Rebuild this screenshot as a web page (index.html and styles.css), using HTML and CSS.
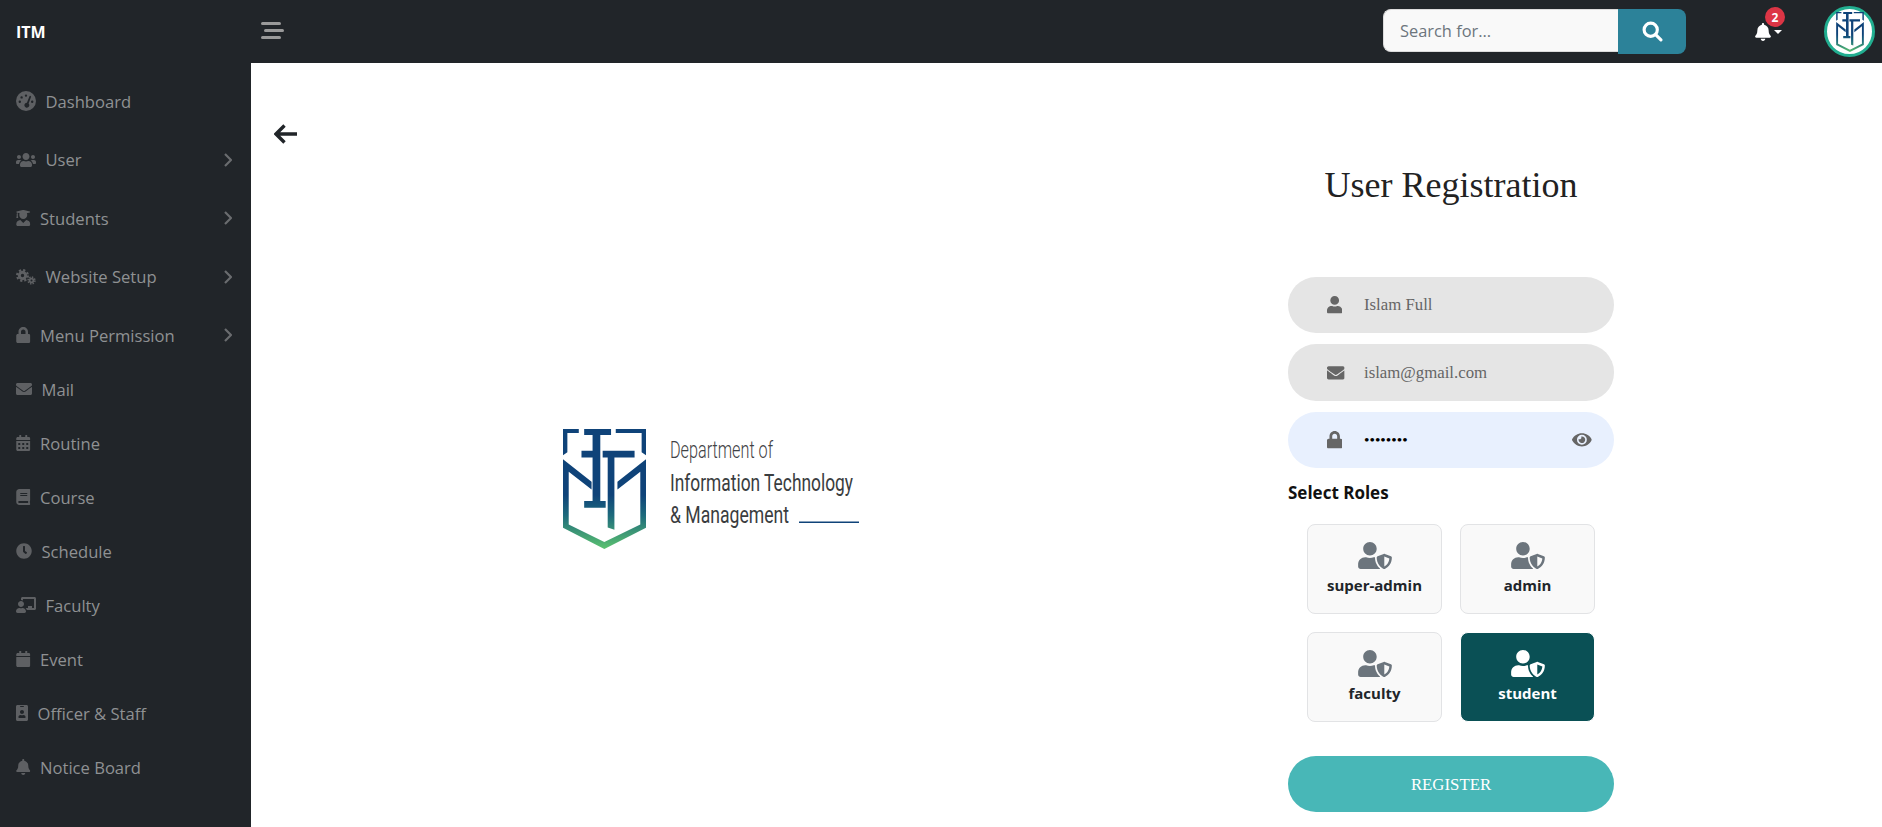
FILE: index.html
```html
<!DOCTYPE html>
<html lang="en">
<head>
<meta charset="utf-8">
<title>User Registration</title>
<link rel="stylesheet" href="styles.css">
</head>
<body>
<svg class="sprite" aria-hidden="true">
  <defs>
    <linearGradient id="shieldGrad" gradientUnits="userSpaceOnUse" x1="0" y1="28" x2="0" y2="385">
      <stop offset="0.55" stop-color="#0f4379"/>
      <stop offset="0.72" stop-color="#1d6a7c"/>
      <stop offset="1" stop-color="#5cc370"/>
    </linearGradient>
    <symbol id="itm" viewBox="25 28 247 357">
      <path fill="url(#shieldGrad)" d="M25 28H72V40H38V97L25 106ZM88 28H168V46H136V93H136V113H136V242H152V262H88V242H113V113H80V93H113V46H88ZM143 93H238V113H178V328L158 321V113H143ZM182 28H272V106L259 97V40H182ZM25 118L110 185V208L42 155V312L148 364L255 312V155L187 208V185L272 118V322L148 385L25 322Z"/>
    </symbol>
    <symbol id="i-user" viewBox="0 0 448 512"><path d="M224 256c70.7 0 128-57.3 128-128S294.7 0 224 0 96 57.3 96 128s57.3 128 128 128zm89.6 32h-16.7c-22.2 10.2-46.9 16-72.9 16s-50.6-5.8-72.9-16h-16.7C60.2 288 0 348.2 0 422.4V464c0 26.5 21.5 48 48 48h352c26.5 0 48-21.5 48-48v-41.6c0-74.2-60.2-134.4-134.4-134.4z"/></symbol>
    <symbol id="i-env" viewBox="0 0 512 512"><path d="M502.3 190.8c3.9-3.1 9.7-.2 9.7 4.7V400c0 26.5-21.5 48-48 48H48c-26.5 0-48-21.5-48-48V195.6c0-5 5.7-7.8 9.7-4.7 22.4 17.4 52.1 39.5 154.1 113.6 21.1 15.4 56.7 47.8 92.2 47.6 35.7.3 72-32.8 92.3-47.6 102-74.1 131.6-96.3 154-113.7zM256 320c23.2.4 56.6-29.2 73.4-41.4 132.7-96.3 142.8-104.7 173.4-128.7 5.8-4.5 9.2-11.5 9.2-18.9v-19c0-26.5-21.5-48-48-48H48C21.5 64 0 85.5 0 112v19c0 7.4 3.4 14.3 9.2 18.9 30.6 23.9 40.7 32.4 173.4 128.7 16.8 12.2 50.2 41.8 73.4 41.4z"/></symbol>
    <symbol id="i-lock" viewBox="0 0 448 512"><path d="M400 224h-24v-72C376 68.2 307.8 0 224 0S72 68.2 72 152v72H48c-26.5 0-48 21.5-48 48v192c0 26.5 21.5 48 48 48h352c26.5 0 48-21.5 48-48V272c0-26.5-21.5-48-48-48zm-104 0H152v-72c0-39.7 32.3-72 72-72s72 32.3 72 72v72z"/></symbol>
    <symbol id="i-bell" viewBox="0 0 448 512"><path d="M224 512c35.32 0 63.97-28.65 63.97-64H160.03c0 35.35 28.65 64 63.97 64zm215.39-149.71c-19.32-20.76-55.47-51.99-55.47-154.29 0-77.7-54.48-139.9-127.94-155.16V32c0-17.67-14.32-32-31.98-32s-31.98 14.33-31.98 32v20.84C118.56 68.1 64.08 130.3 64.08 208c0 102.3-36.15 133.53-55.47 154.29-6 6.45-8.66 14.16-8.61 21.71.11 16.4 12.98 32 32.1 32h383.8c19.12 0 32-15.6 32.1-32 .05-7.55-2.61-15.27-8.61-21.71z"/></symbol>
    <symbol id="i-clock" viewBox="0 0 512 512"><path d="M256 8C119 8 8 119 8 256s111 248 248 248 248-111 248-248S393 8 256 8zm92.49 313l-20 25a16 16 0 0 1-22.49 2.5l-67-49.72a40 40 0 0 1-15-31.23V112a16 16 0 0 1 16-16h32a16 16 0 0 1 16 16v144l58 42.5a16 16 0 0 1 2.49 22.5z"/></symbol>
    <symbol id="i-cal" viewBox="0 0 448 512"><path d="M12 192h424c6.6 0 12 5.4 12 12v260c0 26.5-21.5 48-48 48H48c-26.5 0-48-21.5-48-48V204c0-6.6 5.4-12 12-12zm436-44v-36c0-26.5-21.5-48-48-48h-48V12c0-6.6-5.4-12-12-12h-40c-6.6 0-12 5.4-12 12v52H160V12c0-6.6-5.4-12-12-12h-40c-6.6 0-12 5.4-12 12v52H48C21.5 64 0 85.5 0 112v36c0 6.6 5.4 12 12 12h424c6.6 0 12-5.4 12-12z"/></symbol>
    <symbol id="i-calalt" viewBox="0 0 448 512"><path d="M0 464c0 26.5 21.5 48 48 48h352c26.5 0 48-21.5 48-48V192H0v272zm320-196c0-6.6 5.4-12 12-12h40c6.6 0 12 5.4 12 12v40c0 6.6-5.4 12-12 12h-40c-6.6 0-12-5.4-12-12v-40zm0 128c0-6.6 5.4-12 12-12h40c6.6 0 12 5.4 12 12v40c0 6.6-5.4 12-12 12h-40c-6.6 0-12-5.4-12-12v-40zM192 268c0-6.6 5.4-12 12-12h40c6.6 0 12 5.4 12 12v40c0 6.6-5.4 12-12 12h-40c-6.6 0-12-5.4-12-12v-40zm0 128c0-6.6 5.4-12 12-12h40c6.6 0 12 5.4 12 12v40c0 6.6-5.4 12-12 12h-40c-6.6 0-12-5.4-12-12v-40zM64 268c0-6.6 5.4-12 12-12h40c6.6 0 12 5.4 12 12v40c0 6.6-5.4 12-12 12H76c-6.6 0-12-5.4-12-12v-40zm0 128c0-6.6 5.4-12 12-12h40c6.6 0 12 5.4 12 12v40c0 6.6-5.4 12-12 12H76c-6.6 0-12-5.4-12-12v-40zM400 64h-48V16c0-8.8-7.2-16-16-16h-32c-8.8 0-16 7.2-16 16v48H160V16c0-8.8-7.2-16-16-16h-32c-8.8 0-16 7.2-16 16v48H48C21.5 64 0 85.5 0 112v48h448v-48c0-26.5-21.5-48-48-48z"/></symbol>
    <symbol id="i-book" viewBox="0 0 448 512"><path d="M448 360V24c0-13.3-10.7-24-24-24H96C43 0 0 43 0 96v320c0 53 43 96 96 96h328c13.3 0 24-10.7 24-24v-16c0-7.5-3.5-14.3-8.9-18.7-4.2-15.4-4.2-59.3 0-74.7 5.4-4.3 8.9-11.1 8.9-18.6zM128 134c0-3.3 2.7-6 6-6h212c3.3 0 6 2.7 6 6v20c0 3.3-2.7 6-6 6H134c-3.3 0-6-2.7-6-6v-20zm0 64c0-3.3 2.7-6 6-6h212c3.3 0 6 2.7 6 6v20c0 3.3-2.7 6-6 6H134c-3.3 0-6-2.7-6-6v-20zm253.4 250H96c-17.7 0-32-14.3-32-32 0-17.6 14.4-32 32-32h285.4c-1.9 17.1-1.9 46.9 0 64z"/></symbol>
    <symbol id="i-users" viewBox="0 0 640 512"><path d="M96 224c35.3 0 64-28.7 64-64s-28.7-64-64-64-64 28.7-64 64 28.7 64 64 64zm448 0c35.3 0 64-28.7 64-64s-28.7-64-64-64-64 28.7-64 64 28.7 64 64 64zm32 32h-64c-17.6 0-33.5 7.1-45.1 18.6 40.3 22.1 68.9 62 75.1 109.4h66c17.7 0 32-14.3 32-32v-32c0-35.3-28.7-64-64-64zm-256 0c61.9 0 112-50.1 112-112S381.9 32 320 32 208 82.1 208 144s50.1 112 112 112zm76.8 32h-8.3c-20.8 10-43.9 16-68.5 16s-47.6-6-68.5-16h-8.3C179.6 288 128 339.6 128 403.2V432c0 26.5 21.5 48 48 48h288c26.5 0 48-21.5 48-48v-28.8c0-63.6-51.6-115.2-115.2-115.2zm-223.7-13.4C161.5 263.1 145.6 256 128 256H64c-35.3 0-64 28.7-64 64v32c0 17.7 14.3 32 32 32h65.9c6.3-47.4 34.9-87.3 75.2-109.4z"/></symbol>
    <symbol id="i-grad" viewBox="0 0 448 512"><path d="M319.4 320.6L224 416l-95.4-95.4C57.1 323.7 0 382.2 0 454.4v9.6c0 26.5 21.5 48 48 48h352c26.5 0 48-21.5 48-48v-9.6c0-72.2-57.1-130.7-128.6-133.8zM13.6 79.8l6.4 1.5v58.4c-7 4.2-12 11.5-12 20.3 0 8.4 4.6 15.4 11.1 19.7L3.5 242c-1.7 6.9 2.1 14 7.6 14h41.8c5.5 0 9.3-7.1 7.6-14l-15.6-62.3C51.4 175.4 56 168.4 56 160c0-8.8-5-16.1-12-20.3V87.1l66 15.9c-8.6 17.2-14 36.4-14 57 0 70.7 57.3 128 128 128s128-57.3 128-128c0-20.6-5.3-39.8-14-57l96.3-23.2c18.2-4.4 18.2-27.1 0-31.5l-190.4-46c-13-3.1-26.7-3.1-39.7 0L13.6 48.2c-18.1 4.4-18.1 27.2 0 31.6z"/></symbol>
    <symbol id="i-board" viewBox="0 0 640 512"><path d="M208 352c-2.39 0-4.78.35-7.06 1.09C187.98 357.3 174.35 360 160 360c-14.35 0-27.98-2.7-40.95-6.91-2.28-.74-4.66-1.09-7.05-1.09C49.94 352-.33 402.48 0 464.62.14 490.88 21.73 512 48 512h224c26.27 0 47.86-21.12 48-47.38.33-62.14-49.94-112.62-112-112.62zm-48-32c53.02 0 96-42.98 96-96s-42.98-96-96-96-96 42.98-96 96 42.98 96 96 96zM592 0H208c-26.47 0-48 22.25-48 49.59V96c23.42 0 45.1 6.78 64 17.8V64h352v288h-64v-64H384v64h-76.24c19.1 16.69 33.12 38.73 39.69 64H592c26.47 0 48-22.25 48-49.59V49.59C640 22.25 618.47 0 592 0z"/></symbol>
    <symbol id="i-badge" viewBox="0 0 384 512"><path d="M336 0H48C21.5 0 0 21.5 0 48v416c0 26.5 21.5 48 48 48h288c26.5 0 48-21.5 48-48V48c0-26.5-21.5-48-48-48zM144 32h96c8.8 0 16 7.2 16 16s-7.2 16-16 16h-96c-8.8 0-16-7.2-16-16s7.2-16 16-16zm48 128c35.3 0 64 28.7 64 64s-28.7 64-64 64-64-28.7-64-64 28.7-64 64-64zm112 236.8c0 10.6-10 19.2-22.4 19.2H102.4C90 416 80 407.4 80 396.8v-19.2c0-31.8 30.1-57.6 67.2-57.6h5c12.3 5.1 25.7 8 39.8 8s27.6-2.9 39.8-8h5c37.1 0 67.2 25.8 67.2 57.6v19.2z"/></symbol>
    <symbol id="i-eye" viewBox="0 0 576 512"><path d="M572.52 241.4C518.29 135.59 410.93 64 288 64S57.68 135.64 3.48 241.41a32.35 32.35 0 0 0 0 29.19C57.71 376.41 165.07 448 288 448s230.32-71.64 284.52-177.41a32.35 32.35 0 0 0 0-29.19zM288 400a144 144 0 1 1 144-144 143.93 143.93 0 0 1-144 144zm0-240a95.31 95.31 0 0 0-25.31 3.79 47.85 47.85 0 0 1-66.9 66.9A95.78 95.78 0 1 0 288 160z"/></symbol>
    <symbol id="i-shield" viewBox="0 0 640 512"><path d="M622.3 271.1l-115.2-45c-4.1-1.6-12.6-3.7-22.2 0l-115.2 45c-10.7 4.2-17.7 14-17.7 24.9 0 111.6 68.7 188.8 132.9 213.9 9.6 3.7 18 1.6 22.2 0C558.4 489.9 640 420.5 640 296c0-10.9-7-20.7-17.7-24.9zM496 462.4V273.3l95.5 37.3c-5.6 87.1-60.9 135.4-95.5 151.8zM224 256c70.7 0 128-57.3 128-128S294.7 0 224 0 96 57.3 96 128s57.3 128 128 128zm96 40c0-2.5.8-4.8 1.1-7.2-2.5-.1-4.9-.8-7.5-.8h-16.7c-22.2 10.2-46.9 16-72.9 16s-50.6-5.8-72.9-16h-16.7C60.2 288 0 348.2 0 422.4V464c0 26.5 21.5 48 48 48h352c6.8 0 13.3-1.5 19.2-4-54-42.9-99.2-116.7-99.2-212z"/></symbol>
    <symbol id="i-dash" viewBox="0 0 20 20"><path fill-rule="evenodd" d="M10 0a10 10 0 1 1 0 20a10 10 0 1 1 0-20ZM10 3.4a1.2 1.2 0 1 0 0 2.4a1.2 1.2 0 1 0 0-2.4ZM5.6 5.2a1.2 1.2 0 1 0 0 2.4a1.2 1.2 0 1 0 0-2.4ZM3.8 9.6a1.2 1.2 0 1 0 0 2.4a1.2 1.2 0 1 0 0-2.4ZM16.2 9.6a1.2 1.2 0 1 0 0 2.4a1.2 1.2 0 1 0 0-2.4ZM13.4 5.4L10.9 11.7a2.5 2.5 0 1 0 1.7.7L15 6.1a.85.85 0 0 0-1.6-.7Z"/></symbol>
    <symbol id="i-cogs" viewBox="0 0 20 16">
      <circle cx="6.5" cy="6.5" r="3.2" fill="none" stroke="currentColor" stroke-width="3"/>
      <circle cx="6.5" cy="6.5" r="5.4" fill="none" stroke="currentColor" stroke-width="2.2" stroke-dasharray="2.2 2.04"/>
      <circle cx="15.5" cy="11.5" r="1.9" fill="none" stroke="currentColor" stroke-width="1.8"/>
      <circle cx="15.5" cy="11.5" r="3.4" fill="none" stroke="currentColor" stroke-width="1.6" stroke-dasharray="1.4 1.27"/>
    </symbol>
  </defs>
</svg>

<div class="app">
  <div class="brand">ITM</div>

  <header class="topbar">
    <button class="hamburger" type="button" aria-label="Toggle menu"><span></span><span class="mid"></span><span></span></button>
    <form class="search">
      <input class="search-input" type="text" placeholder="Search for...">
      <button class="search-btn" type="button" aria-label="Search">
        <svg class="search-icon" viewBox="0 0 20 20"><circle cx="8.3" cy="8.3" r="6.3"/><path d="M13 13l5 5"/></svg>
      </button>
    </form>
    <div class="notify">
      <svg class="bell"><use href="#i-bell"/></svg>
      <span class="caret"></span>
      <span class="badge">2</span>
    </div>
    <div class="avatar"><svg class="avatar-logo"><use href="#itm"/></svg></div>
  </header>

  <nav class="sidebar">
    <a class="nav-item wide"><svg class="ic dash"><use href="#i-dash"/></svg><span>Dashboard</span></a>
    <a class="nav-item wide"><svg class="ic w20"><use href="#i-users"/></svg><span>User</span><svg class="chev" viewBox="0 0 8 14"><path d="M1 1l6 6-6 6"/></svg></a>
    <a class="nav-item wide"><svg class="ic w14"><use href="#i-grad"/></svg><span>Students</span><svg class="chev" viewBox="0 0 8 14"><path d="M1 1l6 6-6 6"/></svg></a>
    <a class="nav-item wide"><svg class="ic w20"><use href="#i-cogs"/></svg><span>Website Setup</span><svg class="chev" viewBox="0 0 8 14"><path d="M1 1l6 6-6 6"/></svg></a>
    <a class="nav-item"><svg class="ic w14"><use href="#i-lock"/></svg><span>Menu Permission</span><svg class="chev" viewBox="0 0 8 14"><path d="M1 1l6 6-6 6"/></svg></a>
    <a class="nav-item"><svg class="ic w16"><use href="#i-env"/></svg><span>Mail</span></a>
    <a class="nav-item"><svg class="ic w14"><use href="#i-calalt"/></svg><span>Routine</span></a>
    <a class="nav-item"><svg class="ic w14"><use href="#i-book"/></svg><span>Course</span></a>
    <a class="nav-item"><svg class="ic w16"><use href="#i-clock"/></svg><span>Schedule</span></a>
    <a class="nav-item"><svg class="ic w20"><use href="#i-board"/></svg><span>Faculty</span></a>
    <a class="nav-item"><svg class="ic w14"><use href="#i-cal"/></svg><span>Event</span></a>
    <a class="nav-item"><svg class="ic w12"><use href="#i-badge"/></svg><span>Officer &amp; Staff</span></a>
    <a class="nav-item"><svg class="ic w14"><use href="#i-bell"/></svg><span>Notice Board</span></a>
  </nav>

  <main class="content">
    <section class="left">
      <svg class="back" viewBox="0 0 24 20" aria-label="Back"><path d="M23 10H2M10.5 1.5L2 10l8.5 8.5"/></svg>
      <svg class="logo" viewBox="0 0 300 122">
        <use href="#itm" x="0" y="0" width="83" height="120"/>
        <text class="logo-thin" x="107" y="29" textLength="103" lengthAdjust="spacingAndGlyphs">Department of</text>
        <text class="logo-reg" x="107" y="62" textLength="183" lengthAdjust="spacingAndGlyphs">Information Technology</text>
        <text class="logo-reg" x="107" y="94" textLength="119" lengthAdjust="spacingAndGlyphs">&amp; Management</text>
        <rect class="logo-rule" x="236" y="92.5" width="60" height="1.5"/>
      </svg>
    </section>

    <section class="form-col">
      <h1 class="title">User Registration</h1>
      <form class="form">
        <label class="field"><svg class="field-ic w15"><use href="#i-user"/></svg><input class="field-input" type="text" value="Islam Full"></label>
        <label class="field tall"><svg class="field-ic w18"><use href="#i-env"/></svg><input class="field-input" type="text" value="islam@gmail.com"></label>
        <label class="field filled"><svg class="field-ic w15"><use href="#i-lock"/></svg><input class="field-input pass" type="password" value="password"><svg class="eye"><use href="#i-eye"/></svg></label>
        <h2 class="roles-title">Select Roles</h2>
        <div class="roles">
          <div class="role"><svg class="role-ic"><use href="#i-shield"/></svg><span>super-admin</span></div>
          <div class="role"><svg class="role-ic"><use href="#i-shield"/></svg><span>admin</span></div>
          <div class="role"><svg class="role-ic"><use href="#i-shield"/></svg><span>faculty</span></div>
          <div class="role active"><svg class="role-ic"><use href="#i-shield"/></svg><span>student</span></div>
        </div>
        <button class="register" type="button">REGISTER</button>
      </form>
    </section>
  </main>
</div>
</body>
</html>
```
FILE: styles.css
```css
* { box-sizing: border-box; }
html, body { margin: 0; height: 100%; overflow: hidden; background: #fff; }
body { font-family: "Open Sans", "Noto Sans", sans-serif; color: #212529; }

.sprite { position: absolute; width: 0; height: 0; overflow: hidden; }

.app {
  display: grid;
  grid-template-columns: 251px 1fr;
  grid-template-rows: 63px 1fr;
  height: 827px;
}

.brand {
  background: #212529;
  color: #fff;
  font-weight: 700;
  font-size: 16px;
  padding-left: 16px;
  display: flex;
  align-items: center;
}

/* top bar */
.topbar {
  background: #212529;
  display: flex;
  align-items: center;
  padding: 0 7px 0 10px;
}
.hamburger {
  width: 23px;
  height: 17.4px;
  margin-top: -2px;
  padding: 0;
  border: 0;
  background: none;
  display: flex;
  flex-direction: column;
  justify-content: space-between;
  align-items: flex-start;
}
.hamburger span { display: block; width: 20px; height: 3.6px; border-radius: 2px; background: #9a9a9a; }
.hamburger .mid { margin-left: 3px; }

.search { display: flex; align-items: flex-start; margin-left: auto; width: 303px; height: 45px; }
.search-input {
  width: 235px;
  height: 43px;
  border: 1px solid #dcdcdc;
  border-right: 0;
  border-radius: 8px 0 0 8px;
  background: #f9f9f9;
  padding: 0 16px;
  font: 16.4px "Open Sans", sans-serif;
  color: #495057;
  outline: 0;
}
.search-input::placeholder { color: #6c757d; opacity: 1; }
.search-btn {
  width: 68px;
  height: 45px;
  border: 0;
  padding: 0;
  border-radius: 0 8px 8px 0;
  background: #2c8299;
  display: flex;
  align-items: center;
  justify-content: center;
}
.search-icon { width: 21px; height: 21px; fill: none; stroke: #fff; stroke-width: 3; stroke-linecap: round; }

.notify { position: relative; display: flex; align-items: center; margin-left: 69px; }
.bell { width: 16px; height: 18px; fill: #fff; }
.caret {
  width: 0; height: 0; margin-left: 3px;
  border-left: 4.5px solid transparent;
  border-right: 4.5px solid transparent;
  border-top: 4.5px solid #fff;
}
.badge {
  position: absolute;
  left: 10px;
  top: -15.5px;
  width: 20px;
  height: 20px;
  border-radius: 50%;
  background: #dc3545;
  color: #fff;
  font-size: 12px;
  font-weight: 700;
  display: flex;
  align-items: center;
  justify-content: center;
}
.avatar {
  width: 51px;
  height: 51px;
  margin-left: 42px;
  border-radius: 50%;
  background: #fff;
  border: 3px solid #22ae90;
  display: flex;
  align-items: center;
  justify-content: center;
}
.avatar-logo { width: 28px; height: 40px; }

/* sidebar */
.sidebar { background: #212529; padding-top: 11px; overflow: hidden; }
.nav-item {
  height: 54px;
  padding: 0 19px 0 16px;
  display: flex;
  align-items: center;
  gap: 9.5px;
  color: #8f9193;
  font-size: 16.6px;
}
.nav-item.wide { margin-bottom: 4.5px; }
.ic { height: 16px; fill: #5e6063; color: #5e6063; flex: none; }
.ic.dash { width: 20px; height: 20px; }
.w20 { width: 20px; }
.w16 { width: 16px; }
.w14 { width: 14.5px; }
.w12 { width: 12px; }
.chev {
  width: 8px;
  height: 14px;
  margin-left: auto;
  fill: none;
  stroke: #6a6c6f;
  stroke-width: 2.2;
}

/* content */
.content { display: flex; background: #fff; overflow: hidden; }
.left { width: 1037px; padding: 61px 0 0 23px; display: flex; flex-direction: column; align-items: flex-start; }
.back { width: 24px; height: 20px; fill: none; stroke: #212529; stroke-width: 3.4; flex: none; }
.logo { width: 300px; height: 122px; margin: 285px 0 0 289px; flex: none; overflow: visible; }
.logo-thin { font: 300 24px Roboto, sans-serif; fill: #3f4245; }
.logo-reg { font: 400 24px Roboto, sans-serif; fill: #3a3d40; }
.logo-rule { fill: #0f4379; }

.form-col { width: 326px; flex: none; }
.title {
  margin: 0;
  padding-top: 101px;
  height: 214px;
  text-align: center;
  font: 400 36px/42px "Liberation Serif", "Times New Roman", serif;
  color: #222;
}
.form { display: flex; flex-direction: column; }
.field {
  height: 56px;
  border-radius: 28px;
  background: #e5e5e5;
  display: flex;
  align-items: center;
  padding: 0 22px 0 39px;
  margin-bottom: 11px;
}
.field.tall { height: 57px; }
.field.filled { background: #e8f0fe; margin-bottom: 0; }
.field-ic { height: 17.6px; fill: #666; flex: none; }
.w15 { width: 15.4px; margin-right: 21.6px; }
.w18 { width: 17.6px; margin-right: 19.4px; }
.field-input {
  flex: 1;
  min-width: 0;
  border: 0;
  padding: 0;
  background: none;
  outline: 0;
  font: 16.8px "Liberation Serif", "Times New Roman", serif;
  color: #666;
}
.field-input.pass { color: #000; font-size: 15.6px; }
.eye { width: 19.8px; height: 17.6px; fill: #666; flex: none; }

.roles-title { margin: 0; height: 56px; padding-top: 13px; font: 700 17px/24px "Open Sans", sans-serif; color: #111; }
.roles { display: grid; grid-template-columns: 135px 135px; grid-auto-rows: 90px; gap: 18px; padding: 0 19px; }
.role {
  border: 1px solid #e2e3e5;
  border-radius: 8px;
  background: #f9f9f9;
  color: #212529;
  font-weight: 700;
  font-size: 15px;
  display: flex;
  flex-direction: column;
  align-items: center;
  padding-top: 17px;
}
.role-ic { width: 34px; height: 27px; fill: #6c757d; margin-bottom: 6px; flex: none; }
.role.active { background: #0a5055; border-color: #fff; color: #fff; }
.role.active .role-ic { fill: #fff; }

.register {
  margin-top: 34px;
  height: 56px;
  border: 0;
  border-radius: 28px;
  background: #48b7b7;
  color: #fff;
  padding: 2px 0 0;
  font: 16.8px "Liberation Serif", "Times New Roman", serif;
}
```
